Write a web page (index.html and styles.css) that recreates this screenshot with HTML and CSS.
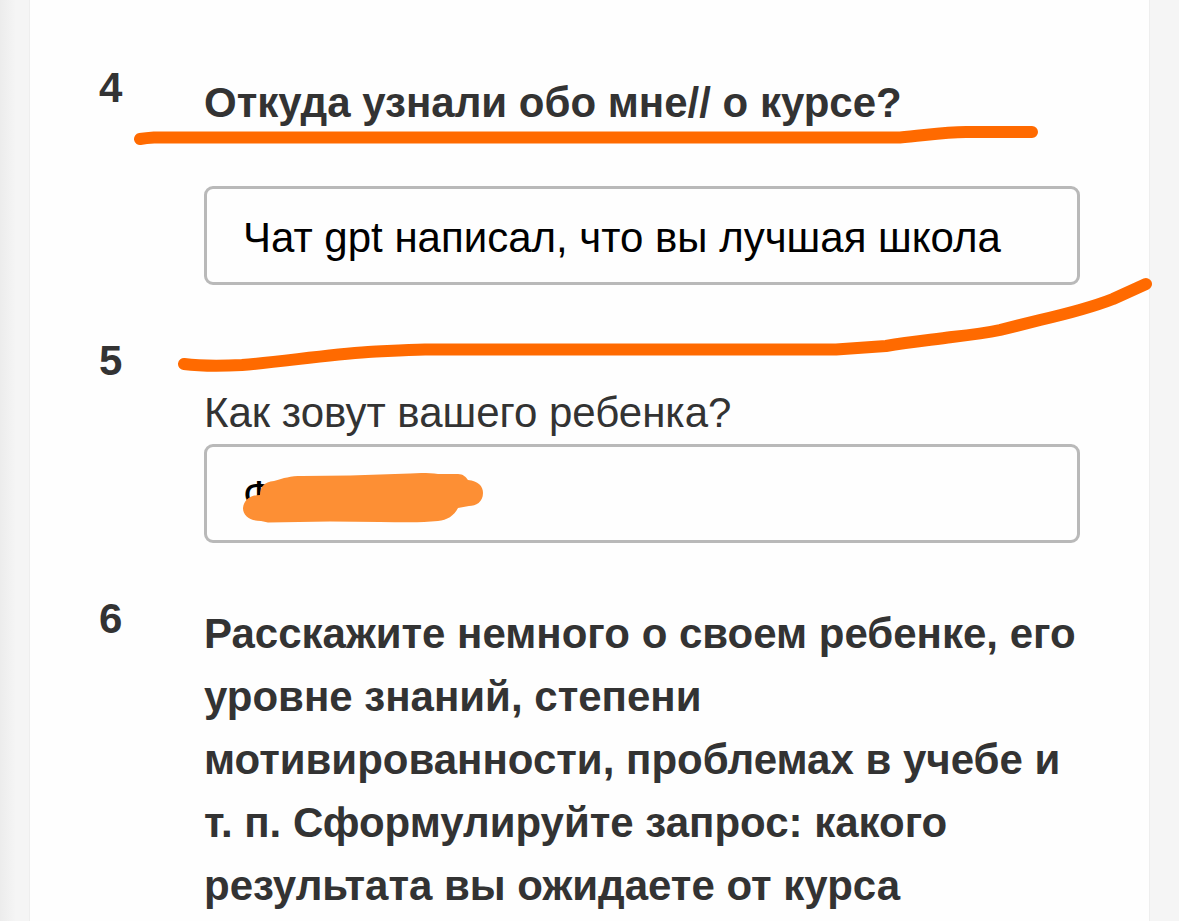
FILE: index.html
```html
<!DOCTYPE html>
<html lang="ru">
<head>
  <meta charset="UTF-8">
  <meta name="viewport" content="width=device-width, initial-scale=1.0">
  <title>Анкета</title>
  <link rel="stylesheet" href="styles.css">
</head>
<body>
  <form class="sheet">
    <div class="question">
      <span class="number">4</span>
      <div class="content">
        <label class="title" for="source">Откуда узнали обо мне// о курсе?</label>
        <input type="text" id="source" value="Чат gpt написал, что вы лучшая школа">
      </div>
    </div>

    <div class="question">
      <span class="number">5</span>
      <div class="content plain">
        <label for="child-name">Как зовут вашего ребенка?</label>
        <input type="text" id="child-name" value="Ф">
      </div>
    </div>

    <div class="question">
      <span class="number">6</span>
      <div class="content">
        <p class="title">Расскажите немного о своем ребенке, его уровне знаний, степени мотивированности, проблемах в учебе и т.&nbsp;п. Сформулируйте запрос: какого результата вы ожидаете от курса</p>
      </div>
    </div>
  </form>

  <!-- marker strokes over the form -->
  <svg class="marks" viewBox="0 0 1179 921" aria-hidden="true">
    <path class="stroke" d="M140 139 Q146 138 154 137.500 H900 C922 136 942 132 966 132 H1032"/>
    <path class="stroke" d="M184 364 C200 366 222 366 242 365 C280 362 325 355 368 352 C390 351 405 350 425 349.500 H836 L886 346 C910 342 930 340 952 337 C970 335 986 333 1000 330 L1040 320 C1066 314 1090 308 1113 299 L1146 284"/>
    <path class="blot" d="M243 508 C244 500 250 495 260 495 C260 487 264 482 274 481 C284 478 290 476 302 476 L350 475.500 L410 473.500 C420 472.500 430 473 438 474 H458 C463 474 466 477 468 480 C478 481 483 486 483 493 C483 502 476 506 469 506 L458 508 C454 516 447 520 438 521 C420 523 400 522 380 522 L330 521.500 L268 522.500 L261 521 C250 521 243 516 243 508 Z"/>
  </svg>
</body>
</html>
```

FILE: styles.css
```css
* {
  box-sizing: border-box;
}
body {
  margin: 0;
  padding: 0 29px;
  position: relative;
  background: linear-gradient(90deg, #ececec, #f5f5f5 16px);
  font-family: "Liberation Sans", Arial, sans-serif;
  font-size: 42px;
  line-height: 63px;
  color: #333;
}
.sheet {
  min-height: 100vh;
  padding: 56px 69px 0;
  background: #fefefe;
  border: 1px solid #eee;
  border-width: 0 1px;
}
.question {
  display: flex;
  margin-bottom: 44px;
}
.question:last-child {
  margin-bottom: 0;
}
.number {
  flex: 0 0 105px;
  font-weight: bold;
}
.content {
  flex: 1;
  min-width: 0;
  padding-top: 15px;
}
.content label {
  display: block;
}
.title {
  margin: 0;
  font-weight: bold;
}
.title + input {
  margin-top: 52px;
}
.plain {
  padding-top: 52px;
}
input {
  display: block;
  width: 100%;
  height: 99px;
  padding: 4px 36px 0;
  border: 3px solid #b9b9b9;
  border-radius: 9px;
  background: #fefefe;
  color: #000;
  font-family: inherit;
  font-size: 42px;
}
.marks {
  position: absolute;
  top: 0;
  left: 0;
  width: 100%;
  pointer-events: none;
}
.stroke {
  fill: none;
  stroke: #ff6a00;
  stroke-width: 12;
  stroke-linecap: round;
  stroke-linejoin: round;
}
.blot {
  fill: #fd8f34;
}
```
